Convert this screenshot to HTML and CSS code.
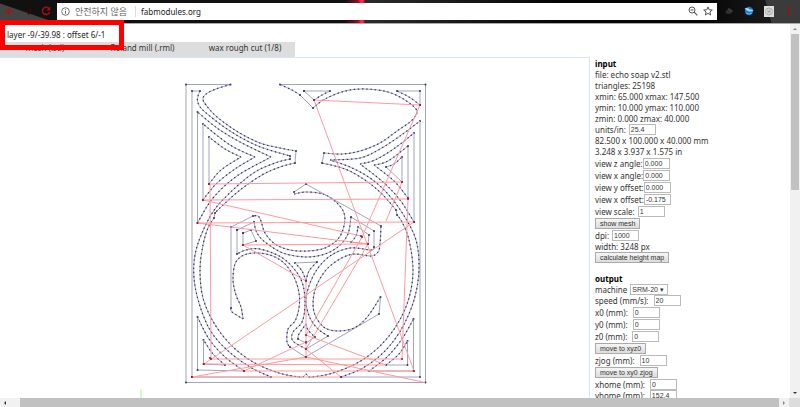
FILE: index.html
```html
<!DOCTYPE html>
<html lang="ko">
<head>
<meta charset="utf-8">
<title>fabmodules.org</title>
<link rel="stylesheet" href="styles.css">
</head>
<body>
<header class="toolbar">
  <nav class="nav">
    <button type="button" aria-label="Back"><svg width="10" height="10" viewBox="0 0 10 10"><path d="M9 5H1.5M5 1.5L1.5 5L5 8.500" fill="none" stroke="#b40d10" stroke-width="1.2"/></svg></button>
    <button type="button" aria-label="Forward"><svg width="10" height="10" viewBox="0 0 10 10"><path d="M1 5H8.500M5 1.500L8.500 5L5 8.500" fill="none" stroke="#35090a" stroke-width="1.200"/></svg></button>
    <button type="button" aria-label="Reload"><svg width="10" height="10" viewBox="0 0 10 10"><path d="M8.300 3A3.700 3.700 0 1 0 8.600 6" fill="none" stroke="#b40d10" stroke-width="1.400"/><path d="M9.200 .8V4.400H5.600Z" fill="#b40d10"/></svg></button>
  </nav>
  <div class="address">
    <svg width="9" height="9" viewBox="0 0 9 9"><circle cx="4.500" cy="4.500" r="3.800" fill="none" stroke="#666" stroke-width=".9"/><path d="M4.500 4V6.800M4.500 2.200V3.200" stroke="#666"/></svg>
    <span class="insecure">안전하지 않음</span>
    <span class="url">fabmodules.org</span>
    <svg width="10" height="10" viewBox="0 0 10 10"><circle cx="4" cy="4" r="3" fill="none" stroke="#555"/><path d="M2.500 4H5.500M6.200 6.200L9.300 9.300" stroke="#555" stroke-width="1.200"/></svg>
    <svg width="10" height="10" viewBox="0 0 10 10"><path d="M5 .9L6.200 3.800L9.300 4L6.900 6L7.700 9L5 7.300L2.300 9L3.100 6L.7 4L3.800 3.800Z" fill="none" stroke="#555"/></svg>
  </div>
  <div class="extensions">
    <svg width="10" height="10" viewBox="0 0 10 10"><path d="M1 6L5 2L9 5L6 8H3Z" fill="#2e2e2e"/><path d="M5 2L9 5L7.500 6.500L3.500 3.500Z" fill="#3c3c3c"/></svg>
    <svg width="10" height="10" viewBox="0 0 10 10"><circle cx="5" cy="5" r="4.200" fill="#1679d8"/><path d="M.5 2.500Q4 1 6 3.500L9.500 4Q8 6 5.500 5.500Q3 5 .5 2.500Z" fill="#a9dcff"/><path d="M2 7Q5 9 8 7" fill="none" stroke="#65b8f5"/></svg>
    <svg width="10" height="11" viewBox="0 0 10 11"><path d="M0 0H10V11H0Z" fill="#dedede"/><circle cx="5" cy="5.500" r="3.500" fill="none" stroke="#aaa"/><path d="M4 3.500V7.500M6 3.500V7.500M4 5.500H6" stroke="#999" stroke-width=".8"/></svg>
    <svg width="10" height="10" viewBox="0 0 10 10"><path d="M4 1H6V3H4ZM4 4H6V6H4ZM4 7H6V9H4Z" fill="#a30a12"/></svg>
  </div>
</header>
<div class="viewport">
  <div class="page">
    <p class="status">layer -9/-39.98 : offset 6/-1</p>
    <nav class="tabs">
      <a href="#mesh">mesh (.stl)</a>
      <a href="#mill">Roland mill (.rml)</a>
      <a href="#cut">wax rough cut (1/8)</a>
    </nav>
    <main class="work">
      <div class="canvas">
        <svg id="toolpath" viewBox="0 58 589 340" preserveAspectRatio="xMidYMin meet" role="img" aria-label="Tool path"></svg>
      </div>
      <form class="panel">
        <h2>input</h2>
        <p>file: echo soap v2.stl</p>
        <p>triangles: 25198</p>
        <p>xmin: 65.000 xmax: 147.500</p>
        <p>ymin: 10.000 ymax: 110.000</p>
        <p>zmin: 0.000 zmax: 40.000</p>
        <div class="row tight"><label for="units">units/in:</label><input id="units" value="25.4"></div>
        <p>82.500 x 100.000 x 40.000 mm</p>
        <p>3.248 x 3.937 x 1.575 in</p>
        <div class="row joined"><label for="vz">view z angle:</label><input id="vz" value="0.000"></div>
        <div class="row joined"><label for="vx">view x angle:</label><input id="vx" value="0.000"></div>
        <div class="row joined"><label for="yo">view y offset:</label><input id="yo" value="0.000"></div>
        <div class="row joined"><label for="xo">view x offset:</label><input id="xo" value="-0.175"></div>
        <div class="row"><label for="scale">view scale:</label><input id="scale" value="1"></div>
        <div class="row"><button type="button">show mesh</button></div>
        <div class="row"><label for="dpi">dpi:</label><input id="dpi" value="1000"></div>
        <p>width: 3248 px</p>
        <div class="row tight"><button type="button">calculate height map</button></div>
        <h2 class="next">output</h2>
        <div class="row tight"><label for="machine">machine</label><select id="machine"><option>SRM-20 ▾</option></select></div>
        <div class="row tight wide"><label for="speed">speed (mm/s):</label><input id="speed" value="20"></div>
        <div class="row wide"><label for="x0">x0 (mm):</label><input id="x0" value="0"></div>
        <div class="row wide"><label for="y0">y0 (mm):</label><input id="y0" value="0"></div>
        <div class="row wide"><label for="z0">z0 (mm):</label><input id="z0" value="0"></div>
        <div class="row"><button type="button">move to xyz0</button></div>
        <div class="row wide"><label for="zjog">zjog (mm):</label><input id="zjog" value="10"></div>
        <div class="row"><button type="button">move to xy0 zjog</button></div>
        <div class="row wide"><label for="xhome">xhome (mm):</label><input id="xhome" value="0"></div>
        <div class="row tight wide"><label for="yhome">yhome (mm):</label><input id="yhome" value="152.4"></div>
      </form>
    </main>
    <div class="highlight"></div>
  </div>
  <div class="vscroll"><i class="arrow up"></i><span class="thumb"></span><span class="rest"></span><i class="arrow down"></i></div>
</div>
<div class="hscroll"><i class="arrow left"></i><span class="thumb"></span><i class="arrow right"></i><span class="corner"></span></div>
<script src="script.js"></script>
</body>
</html>
```
FILE: styles.css
```css
* { box-sizing: border-box; }
body {
  margin: 0;
  height: 100vh;
  display: flex;
  flex-direction: column;
  overflow: hidden;
  background: #fff;
  color: #333;
  font: 8px/11px "Noto Sans", "Noto Sans CJK KR", sans-serif;
}
p, h2 { margin: 0; font-size: 8px; line-height: 11px; }
h2 { color: #000; }
svg { display: block; flex: none; }

.toolbar {
  flex: none;
  height: 24px;
  display: flex;
  align-items: center;
  padding: 0 6px 1px 5px;
  border-bottom: 1px solid #aaa;
  background:
    linear-gradient(19deg, #444 0 18px, transparent 19px),
    linear-gradient(75deg, transparent calc(100% - 34px), #3b3b3b calc(100% - 33px)),
    linear-gradient(90deg, transparent 345px, #8a1020 358px, #ff2845 361px, #ff2845 363px, transparent 365px),
    linear-gradient(90deg, #111 0 360px, #2c2c2c 364px, #050505 560px, #050505 700px, #222 100%);
}
.nav { width: 52px; display: flex; gap: 8px; }
.nav button { padding: 0; border: 0; background: none; }
.address {
  flex: 1;
  height: 17px;
  display: flex;
  align-items: center;
  gap: 5px;
  padding: 0 4px;
  background: #fff;
  font-size: 8px;
}
.insecure { color: #666; font-size: 9px; padding-right: 8px; border-right: 1px solid #ddd; }
.url { flex: 1; color: #222; }
.extensions { display: flex; align-items: center; gap: 10px; padding-left: 7px; }

.viewport { position: relative; flex: 1; min-height: 0; display: flex; }
.viewport::before {
  content: "";
  position: absolute;
  z-index: 1;
  left: 0;
  top: -4px;
  width: 124px;
  height: 5px;
  background: #fe0000;
}
.page { flex: 1; min-width: 0; position: relative; overflow: hidden; display: flex; flex-direction: column; }
.status { padding: 5px 7px 2px; color: #222; }
.tabs { flex: none; width: 295px; height: 15px; display: grid; grid-template-columns: 90px 1fr 100px; background: #ddd; }
.tabs a { color: #333; text-align: center; text-decoration: none; line-height: 11px; }
.work { flex: 1; min-height: 0; display: flex; }
.canvas { flex: 1; min-width: 0; border-top: 1px solid #d6e3f8; border-right: 1px solid #d6e3f8; }
.canvas svg { width: 100%; }
.panel { width: 200px; padding: 1px 0 0 5px; }
.next { margin-top: 10px; }
.highlight {
  position: absolute;
  left: 0;
  top: 0;
  width: 124px;
  height: 26px;
  border: 5px solid #fe0000;
  border-top: 0;
}

.row { height: 12px; display: flex; align-items: center; gap: 3px; }
.row.tight { height: 11px; }
.row.joined { gap: 0; }
.row.wide { gap: 5px; }
.row input, .row select, .row button {
  margin: 0;
  height: 11px;
  border: 1px solid #bbb;
  border-radius: 0;
  background: #fff;
  color: #333;
  font: 7px/9px "Liberation Sans", sans-serif;
}
.row input { width: 27px; padding: 0 1px; }
.row select { width: 38px; padding: 0 1px; appearance: none; }
.row button { padding: 0 4px; background: linear-gradient(#f5f5f5, #ddd); border-color: #aaa; }

.vscroll { width: 10px; display: flex; flex-direction: column; align-items: center; background: #f1f1f1; }
.vscroll .thumb { flex: 156; width: 8px; background: #c1c1c1; }
.vscroll .rest { flex: 198; }
.hscroll { flex: none; height: 9px; display: flex; align-items: center; background: #f1f1f1; }
.hscroll .thumb { flex: 1; height: 9px; background: #c1c1c1; }
.arrow { flex: none; width: 10px; height: 10px; display: grid; place-items: center; }
.arrow::before { content: ""; border: 2px solid transparent; }
.up::before { border-bottom-color: #888; border-top-width: 0; }
.down::before { border-top-color: #333; border-bottom-width: 0; }
.left { width: 20px; padding-right: 10px; }
.left::before { border-right-color: #333; border-left-width: 0; }
.right::before { border-left-color: #888; border-right-width: 0; }
.corner { width: 11px; height: 9px; background: #dcdcdc; }

.cut { fill: none; stroke: #a3a4c0; stroke-width: 1; }
.steps { fill: none; stroke: #33336a; stroke-width: 1.2; stroke-dasharray: 1.4 2.8; }
.vertex { fill: #33336a; }
.jump { fill: none; stroke: #ff9a9a; stroke-width: 1; }
.hit { fill: #a01030; }
.axis { stroke: #9dfa9d; stroke-width: 1; }
```
FILE: script.js
```js
// Each contour is a list of runs: "L" joins points straight, "C" smooths them.
const contours = [
  "L 230.5,84.5 186,84.5 186,382.5 425.5,382.5 425.5,84.5 280,84.5",
  "C 230.5,84.5 216,89 206,94 203,99 206,105 217,117 238,132 260,143 280,148 296,151|L 296,151 295,163|C 295,163 280,167 262,175 240,190 222,206 215,213|L 215,213 214,218|C 214,218 208,228 203,245 200,270 203,298 214,323 231,345 253,362 279,373 300,377 304,376 306,374 308,376 312,377 333,373 359,362 381,345 398,323 409,298 413,270 409,240 402,222 397,215|L 397,215 396,210|C 396,210 382,194 365,180 345,169 322,163|L 322,163 324,153|C 324,153 342,154 360,151 380,143 397,131 410,122 416,115 416,109 405,100 388,92 365,89 345,91 325,99 313,108|L 313,108 300,95|C 300,95 292,90 280,84.5",
  "L 192,377 192,91 200,91|C 200,91 198,96 198,103 205,112 230,131 258,146 290,156|L 290,156 290,159|C 290,159 275,163 255,172 235,188 215,209 202,233 195,255 194,278 199,303 210,330 227,350 250,367 271,377|L 271,377 192,377",
  "L 420,121 420,377 341,377|C 341,377 363,368 385,351 402,328 414,300 419,270 416,240 403,214 387,193 370,178 350,167 330,160|C 330,160 360,158 380,149 400,136 420,121",
  "L 197.5,112 197.5,223|C 197.5,223 213,198 237,176 271,157|C 271,157 240,142 217,128 197.5,112",
  "L 203,124 203,200|C 203,200 216,184 235,169 255,157|C 255,157 230,145 203,124",
  "L 209,137 209,184|C 209,184 221,170 241,157|C 241,157 225,149 209,137",
  "L 414,133 414,222|C 414,222 400,200 383,182 360,164|C 360,164 375,160 395,148 414,133",
  "L 408,146 408,198|C 408,198 394,181 374,165|C 374,165 388,161 408,146",
  "L 402,157 402,182 386,167|C 386,167 394,164 402,157",
  "L 304,91 330,91|C 330,91 322,95 314,100|L 314,100 304,91",
  "L 397,91 420,91 420,105|C 420,105 409,97 397,91",
  "L 197.5,317 197.5,370 244,371|C 244,371 225,357 209,339 197.5,317",
  "L 203.5,340 203.5,364 225,365|C 225,365 213,354 203.5,340",
  "L 413.5,319 413.5,371 369,371|C 369,371 387,357 402,339 413.5,319",
  "L 407.5,341 407.5,365 386,365|C 386,365 399,354 407.5,341",
  "C 294,194 306,192 323,194 336,202 344,213 344,226 338,239 325,248 308,251 290,250 275,244 265,233 261,221 258,216 253,216|L 253,216 231,227 231,308|C 231,308 232,312 243,319|C 243,319 241,307 236,295 233,280 235,264 242,256 254,253 270,255 284,263 294,277 299,293 299,308 295,321 288,329 287,342 290,347|L 290,347 305.5,357 379,314 380.500,297|C 380.500,297 368,316 356,327 340,331 325,328 316,317 313,304 316,287 326,270 340,259 354,254 371,256 378,252 380,244 381,226|L 381,226 306,184 294,192",
  "L 237,230 254,222|C 254,222 257,233 265,242 283,253 306,257 325,254 339,246 348,234 351,217|L 351,217 374,231 374,247|C 374,247 371,250 350,248 330,256 316,271 308,289 306,303 310,318 318,329 328,336|L 328,336 306,349|C 306,349 293,341 293,332 302,322 305,305 303,285 295,270 281,257 260,249 246,250 237,254|L 237,254 237,230",
  "L 295,263 317,262|C 317,262 309,271 306,281|C 306,281 302,271 295,263",
  "L 243,233 251,230 256,241 243,245 243,233",
  "L 358,227 369,235 368,244 351,242|C 351,242 356,236 358,227",
  "C 306,324 308,330 315,337|L 315,337 306,343 298,339|C 298,339 299,334 306,324"
];

const jumps = [
  "314,100 420,105", "314,100 414,371", "420,105 362,237 306,335",
  "368,244 306,349", "209,184 402,182 386,221", "203,200 408,199 402,359",
  "197.5,223 414,222", "203,200 361,236", "197.5,223 368,244", "243,245 368,244",
  "243,245 306,281 306,357", "210,184 211,359 402,359", "204,364 386,365",
  "244,371 414,371", "192,377 341,377", "204,364 414,222", "192,377 306,357",
  "244,371 306,342", "306,335 386,365", "306,349 341,377", "306,357 425,382.5"
];

const svg = document.getElementById("toolpath");

function add(name, attrs) {
  const el = document.createElementNS("http://www.w3.org/2000/svg", name);
  for (const key in attrs) el.setAttribute(key, attrs[key]);
  svg.append(el);
}

function parse(text) {
  return text.trim().split(" ").map(pair => pair.split(",").map(Number));
}

function smooth(p) {
  let d = "M" + p[0];
  for (let i = 0; i < p.length - 1; i++) {
    const a = p[i - 1] || p[i], b = p[i], c = p[i + 1], e = p[i + 2] || c;
    d += `C${b[0] + (c[0] - a[0]) / 6},${b[1] + (c[1] - a[1]) / 6} ${c[0] - (e[0] - b[0]) / 6},${c[1] - (e[1] - b[1]) / 6} ${c}`;
  }
  return d;
}

for (const contour of contours) {
  for (const run of contour.split("|")) {
    const points = parse(run.slice(2));
    if (run[0] === "C") {
      const d = smooth(points);
      add("path", { class: "cut", d });
      add("path", { class: "steps", d });
    } else {
      add("path", { class: "cut", d: "M" + points.join("L") });
      for (const [cx, cy] of points) add("circle", { class: "vertex", cx, cy, r: 1 });
    }
  }
}

for (const jump of jumps) add("path", { class: "jump", d: "M" + parse(jump).join("L") });
for (const [cx, cy] of parse("314,100 420,105 209,184 203,200 197.5,223 402,182 408,199 414,222 361,236 362,237 368,244 243,245 306,281 306,335 306,342 306,349 306,357 211,359 210,358 402,359 204,364 244,371 192,377 341,377 414,371")) {
  add("circle", { class: "hit", cx, cy, r: 1 });
}
add("path", { class: "axis", d: "M141,389V398" });
```
